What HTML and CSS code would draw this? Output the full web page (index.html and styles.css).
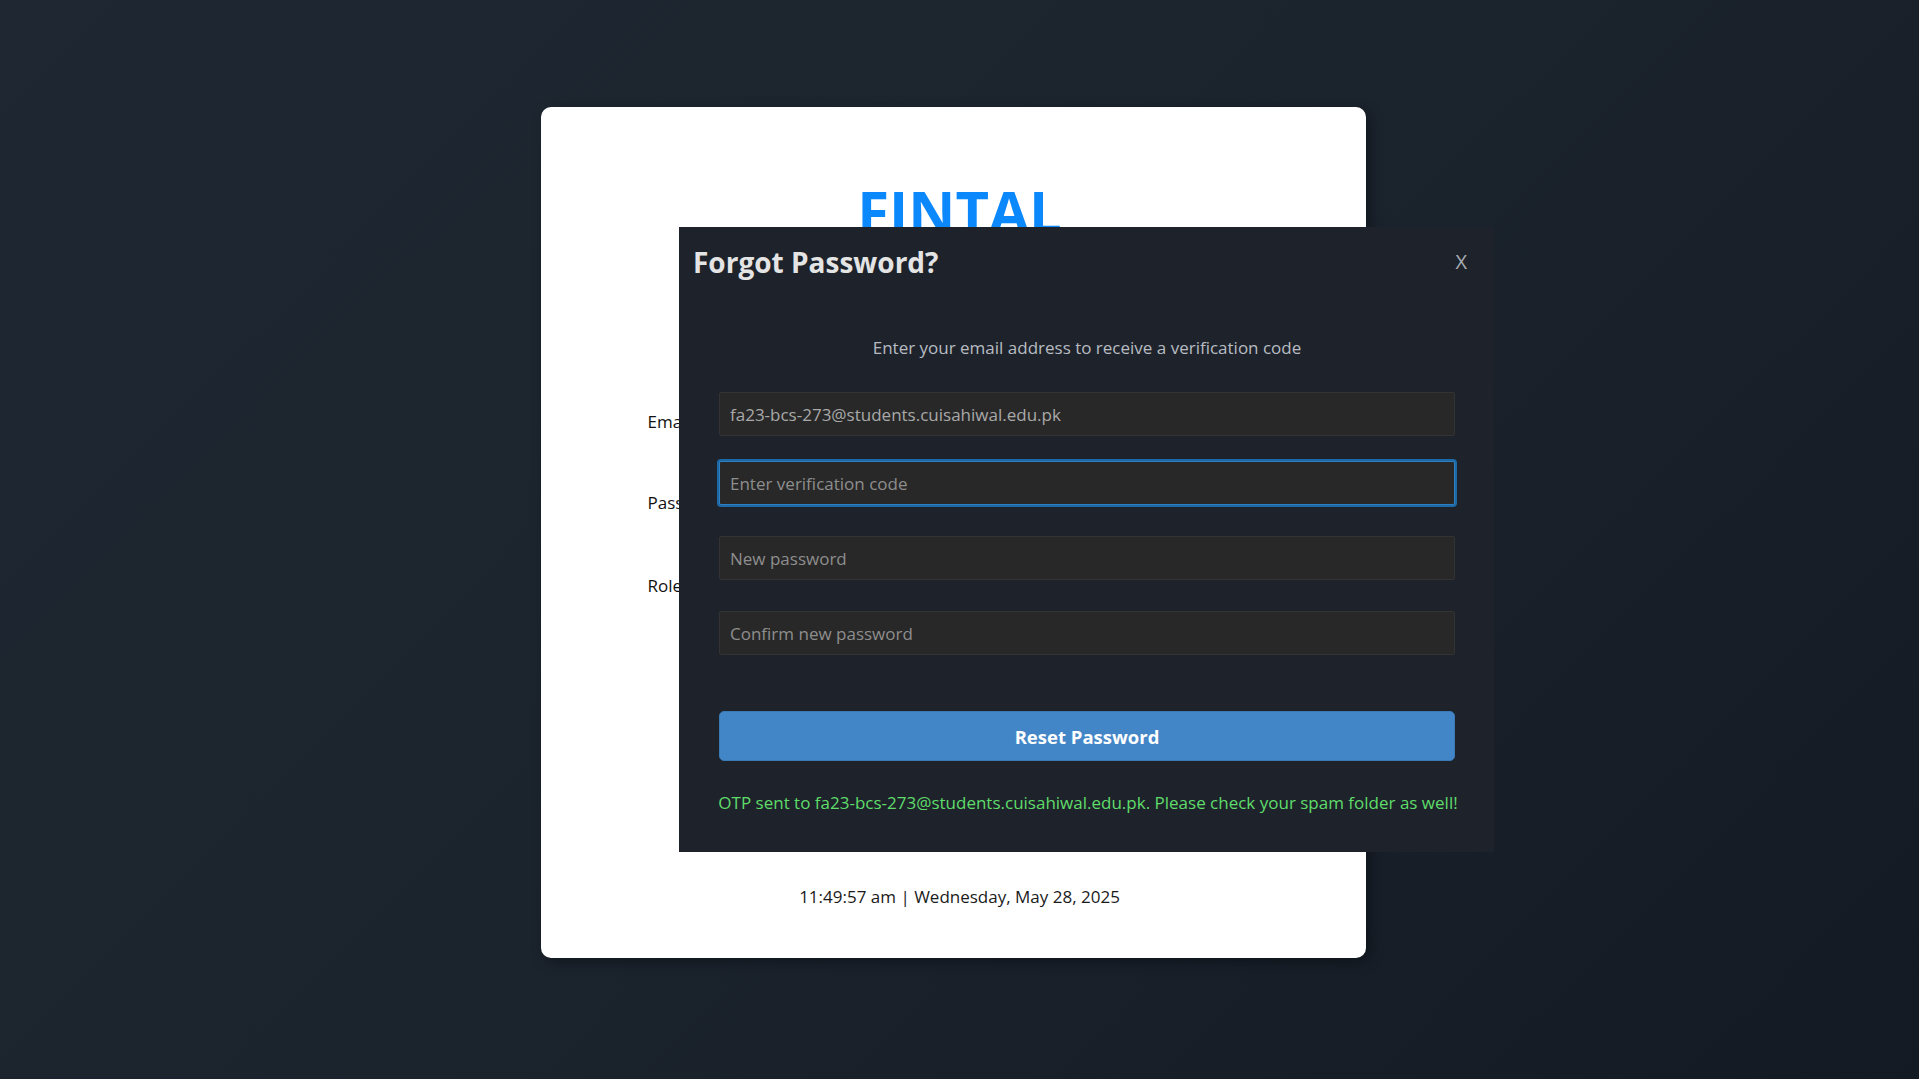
FILE: index.html
```html
<!DOCTYPE html>
<html lang="en">
<head>
<meta charset="utf-8">
<title>FINTAL - Login</title>
<link rel="stylesheet" href="styles.css">
</head>
<body>
<div class="page">
  <main class="card">
    <h1 class="brand">FINTAL</h1>
    <form class="login-form">
      <div class="field">
        <label class="field-label" for="email">Email</label>
        <input class="field-input" id="email" type="email">
      </div>
      <div class="field field--wide">
        <label class="field-label" for="password">Password</label>
        <input class="field-input" id="password" type="password">
      </div>
      <div class="field">
        <label class="field-label" for="role">Role</label>
        <select class="field-input" id="role"></select>
      </div>
    </form>
    <p class="clock">11:49:57 am | Wednesday, May 28, 2025</p>
  </main>
</div>

<div class="modal">
  <div class="modal-header">
    <h2 class="modal-title">Forgot Password?</h2>
    <span class="modal-close">X</span>
  </div>
  <div class="modal-body">
    <p class="modal-sub">Enter your email address to receive a verification code</p>
    <input class="m-input" type="email" value="fa23-bcs-273@students.cuisahiwal.edu.pk" readonly>
    <input class="m-input m-input--focus" type="text" placeholder="Enter verification code">
    <input class="m-input m-input--gap" type="password" placeholder="New password">
    <input class="m-input m-input--gap" type="password" placeholder="Confirm new password">
    <button class="reset-btn" type="button">Reset Password</button>
    <p class="otp-msg">OTP sent to fa23-bcs-273@students.cuisahiwal.edu.pk. Please check your spam folder as well!</p>
  </div>
</div>
</body>
</html>
```

FILE: styles.css
```css
* { box-sizing: border-box; }

html, body {
  margin: 0;
  height: 100%;
}

body {
  font-family: "Open Sans", "Noto Sans", sans-serif;
  background: linear-gradient(135deg, #1f2832 0%, #1b232d 50%, #141a23 100%);
  overflow: hidden;
}

.page {
  min-height: 100vh;
  display: flex;
  justify-content: center;
  align-items: center;
  padding: 0 13px 14px 0;
}

.card {
  width: 825px;
  height: 851px;
  background: #ffffff;
  border-radius: 10px;
  box-shadow: 4px 4px 14px rgba(0, 0, 0, 0.35);
  padding: 75px 40px 50px 53px;
  display: flex;
  flex-direction: column;
}

.brand {
  margin: 0;
  text-align: center;
  font-size: 58px;
  line-height: 58px;
  font-weight: 700;
  color: #0b88fb;
}

.login-form {
  margin: 159px 0 0 54px;
  display: flex;
  flex-direction: column;
}

.field {
  display: flex;
  align-items: center;
  height: 44px;
  margin-bottom: 37px;
}

.field--wide { margin-bottom: 39px; }

.field-label {
  width: 120px;
  font-size: 17px;
  line-height: 23px;
  color: #111;
}

.field-input {
  flex: 1;
  height: 40px;
  border: 1px solid #ccc;
  border-radius: 4px;
}

.clock {
  margin: auto 0 0;
  text-align: center;
  font-size: 17px;
  line-height: 23px;
  color: #1a1a1a;
}

/* Modal overlay */
.modal {
  position: fixed;
  left: 679px;
  top: 227px;
  width: 815px;
  height: 625px;
  background: #1e232b;
}

.modal-header {
  display: flex;
  justify-content: space-between;
  align-items: center;
  padding: 16px 27px 0 14px;
}

.modal-title {
  margin: 0;
  font-size: 28px;
  line-height: 38px;
  font-weight: 700;
  color: #e4e4e4;
}

.modal-close {
  font-size: 20px;
  line-height: 38px;
  color: #a8adb3;
  cursor: pointer;
}

.modal-body {
  padding: 0 39px 0 40px;
  display: flex;
  flex-direction: column;
}

.modal-sub {
  margin: 55px 0 0;
  text-align: center;
  font-size: 17px;
  line-height: 23px;
  color: #b8bcc2;
}

.m-input {
  width: 736px;
  height: 44px;
  margin-top: 33px;
  padding: 0 10px;
  background: #282828;
  border: 1px solid #333;
  border-radius: 2px;
  font-family: inherit;
  font-size: 17px;
  color: #a9a9a9;
  outline: none;
}

.m-input::placeholder { color: #8e8e8e; }

.m-input--focus {
  margin-top: 25px;
  border-color: #2f7fc0;
  box-shadow: 0 0 0 2px #1c69a8;
}

.m-input--gap { margin-top: 31px; }

.reset-btn {
  width: 736px;
  height: 50px;
  margin-top: 56px;
  border: 1px solid #3b79b5;
  border-radius: 5px;
  background: #4286c7;
  color: #ffffff;
  font-family: inherit;
  font-size: 18.5px;
  font-weight: 700;
}

.otp-msg {
  margin: 30px -4px 0 -2px;
  text-align: center;
  font-size: 17px;
  line-height: 23px;
  color: #5fdc6a;
  white-space: nowrap;
}
```
